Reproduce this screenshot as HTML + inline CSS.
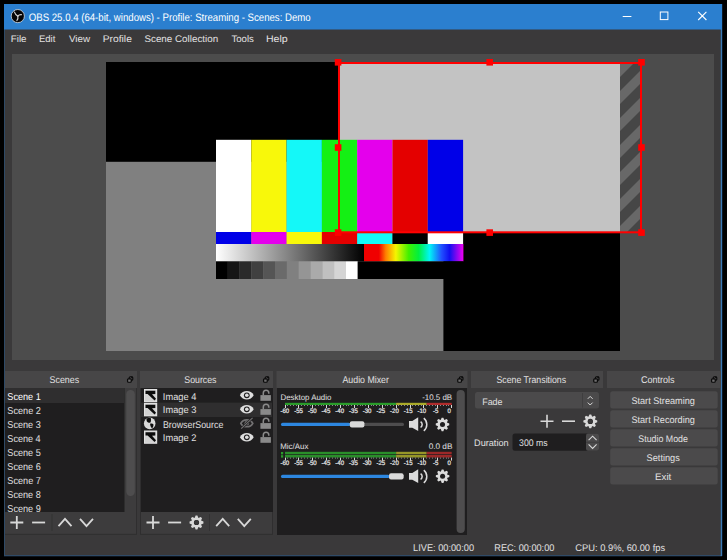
<!DOCTYPE html>
<html><head><meta charset="utf-8"><style>
html,body{margin:0;padding:0;background:#000;width:727px;height:560px;overflow:hidden}
svg{display:block}
text{font-family:"Liberation Sans",sans-serif;white-space:pre;text-rendering:geometricPrecision}
</style></head><body>
<svg width="727" height="560" viewBox="0 0 727 560">
<rect x="0" y="0" width="727" height="560" fill="#000"/>
<rect x="4" y="4" width="718" height="552.3" fill="#2f4a66"/>
<rect x="720.6" y="4" width="1.6" height="552" fill="#3d7ab5"/>
<rect x="5" y="29" width="715.6" height="526" fill="#3a393a"/>
<rect x="4" y="4" width="718" height="25.5" fill="#2b7fcf"/>
<rect x="12" y="54" width="702" height="306" fill="#4c4c4c"/>
<rect x="106" y="62" width="514" height="289" fill="#000"/>
<rect x="106" y="161.8" width="337.4" height="189.2" fill="#808080"/>
<rect x="338" y="62" width="282" height="170" fill="#c3c3c3"/>
<defs><pattern id="stripes" patternUnits="userSpaceOnUse" width="27" height="27" patternTransform="translate(620,64)"><rect width="27" height="27" fill="#464646"/><polygon points="0,0 0,13 13,0" fill="#686868"/><polygon points="0,27 27,0 27,13 13,27" fill="#686868"/></pattern></defs>
<rect x="620" y="62" width="21" height="170.5" fill="url(#stripes)"/>
<rect x="216" y="139.8" width="35.30000000000001" height="92.2" fill="#ffffff"/>
<rect x="251.3" y="139.8" width="35.30000000000001" height="92.2" fill="#f8f80a"/>
<rect x="286.6" y="139.8" width="35.299999999999955" height="92.2" fill="#14f8f8"/>
<rect x="321.9" y="139.8" width="35.30000000000001" height="92.2" fill="#14f014"/>
<rect x="357.2" y="139.8" width="35.30000000000001" height="92.2" fill="#e400ec"/>
<rect x="392.5" y="139.8" width="35.30000000000001" height="92.2" fill="#e40000"/>
<rect x="427.8" y="139.8" width="35.30000000000001" height="92.2" fill="#0000e8"/>
<rect x="216" y="232" width="35.30000000000001" height="12" fill="#0000e8"/>
<rect x="251.3" y="232" width="35.30000000000001" height="12" fill="#e400ec"/>
<rect x="286.6" y="232" width="35.299999999999955" height="12" fill="#f8f80a"/>
<rect x="321.9" y="232" width="35.30000000000001" height="12" fill="#e40000"/>
<rect x="357.2" y="232" width="35.30000000000001" height="12" fill="#14f8f8"/>
<rect x="392.5" y="232" width="35.30000000000001" height="12" fill="#000000"/>
<rect x="427.8" y="232" width="35.30000000000001" height="12" fill="#ffffff"/>
<defs><linearGradient id="gw" x1="0" x2="1"><stop offset="0" stop-color="#fff"/><stop offset="1" stop-color="#000"/></linearGradient><linearGradient id="rb" x1="0" x2="1"><stop offset="0" stop-color="#f00000"/><stop offset="0.15" stop-color="#f00000"/><stop offset="0.22" stop-color="#ff8000"/><stop offset="0.32" stop-color="#f5f500"/><stop offset="0.45" stop-color="#40f000"/><stop offset="0.55" stop-color="#00f040"/><stop offset="0.66" stop-color="#00f5f5"/><stop offset="0.78" stop-color="#2050ff"/><stop offset="0.86" stop-color="#1010f0"/><stop offset="1" stop-color="#f000f0"/></linearGradient></defs>
<rect x="216" y="244" width="148" height="17.4" fill="url(#gw)"/>
<rect x="364" y="244" width="99.4" height="17.4" fill="url(#rb)"/>
<rect x="216.0" y="261.4" width="11.858333333333333" height="17.6" fill="#000000"/>
<rect x="227.80833333333334" y="261.4" width="11.858333333333333" height="17.6" fill="#151515"/>
<rect x="239.61666666666667" y="261.4" width="11.858333333333333" height="17.6" fill="#2a2a2a"/>
<rect x="251.425" y="261.4" width="11.858333333333333" height="17.6" fill="#404040"/>
<rect x="263.23333333333335" y="261.4" width="11.858333333333333" height="17.6" fill="#555555"/>
<rect x="275.04166666666663" y="261.4" width="11.858333333333333" height="17.6" fill="#6a6a6a"/>
<rect x="286.85" y="261.4" width="11.858333333333333" height="17.6" fill="#808080"/>
<rect x="298.6583333333333" y="261.4" width="11.858333333333333" height="17.6" fill="#959595"/>
<rect x="310.46666666666664" y="261.4" width="11.858333333333333" height="17.6" fill="#aaaaaa"/>
<rect x="322.275" y="261.4" width="11.858333333333333" height="17.6" fill="#c0c0c0"/>
<rect x="334.0833333333333" y="261.4" width="11.858333333333333" height="17.6" fill="#d5d5d5"/>
<rect x="345.89166666666665" y="261.4" width="11.858333333333333" height="17.6" fill="#ffffff"/>
<rect x="357.7" y="261.4" width="105.7" height="17.6" fill="#000"/>
<rect x="339" y="63" width="302" height="169.3" fill="none" stroke="#ff0000" stroke-width="2"/>
<rect x="334.8" y="59.0" width="6.6" height="6.6" fill="#ff0000"/>
<rect x="486.4" y="59.0" width="6.6" height="6.6" fill="#ff0000"/>
<rect x="638.2" y="59.0" width="6.6" height="6.6" fill="#ff0000"/>
<rect x="334.8" y="144.2" width="6.6" height="6.6" fill="#ff0000"/>
<rect x="638.2" y="144.2" width="6.6" height="6.6" fill="#ff0000"/>
<rect x="334.8" y="229.29999999999998" width="6.6" height="6.6" fill="#ff0000"/>
<rect x="486.4" y="229.29999999999998" width="6.6" height="6.6" fill="#ff0000"/>
<rect x="638.2" y="229.29999999999998" width="6.6" height="6.6" fill="#ff0000"/>
<text x="28.77" y="20.50" font-size="10.90" fill="#ffffff" textLength="281.92" lengthAdjust="spacingAndGlyphs">OBS 25.0.4 (64-bit, windows) - Profile: Streaming - Scenes: Demo</text>
<g transform="translate(17.8,16.1)"><circle r="6.6" fill="#050505" stroke="#d4dce6" stroke-width="0.8"/><path d="M0,0 Q-2.2,-0.9 -3.3,-4.0" fill="none" stroke="#d0d0d0" stroke-width="1.2" stroke-linecap="round"/><path d="M0,0 Q1.3,-1.7 3.6,-1.5" fill="none" stroke="#d0d0d0" stroke-width="1.2" stroke-linecap="round"/><path d="M0,0 Q0.6,2.3 -0.9,4.4" fill="none" stroke="#d0d0d0" stroke-width="1.2" stroke-linecap="round"/></g>
<rect x="622.7" y="16" width="8.7" height="1" fill="#ffffff"/>
<rect x="660.3" y="12" width="7.6" height="7.6" fill="none" stroke="#ffffff" stroke-width="1"/>
<path d="M698.2,11.8 L706.4,20 M706.4,11.8 L698.2,20" stroke="#ffffff" stroke-width="1.1"/>
<text x="10.82" y="41.60" font-size="9.60" fill="#e1e0e1" textLength="15.73" lengthAdjust="spacingAndGlyphs">File</text>
<text x="38.94" y="41.60" font-size="9.60" fill="#e1e0e1" textLength="16.44" lengthAdjust="spacingAndGlyphs">Edit</text>
<text x="68.95" y="41.60" font-size="9.60" fill="#e1e0e1" textLength="21.04" lengthAdjust="spacingAndGlyphs">View</text>
<text x="102.78" y="41.60" font-size="9.60" fill="#e1e0e1" textLength="29.08" lengthAdjust="spacingAndGlyphs">Profile</text>
<text x="144.46" y="41.60" font-size="9.60" fill="#e1e0e1" textLength="73.68" lengthAdjust="spacingAndGlyphs">Scene Collection</text>
<text x="231.41" y="41.60" font-size="9.60" fill="#e1e0e1" textLength="22.53" lengthAdjust="spacingAndGlyphs">Tools</text>
<text x="265.95" y="41.60" font-size="9.60" fill="#e1e0e1" textLength="21.79" lengthAdjust="spacingAndGlyphs">Help</text>
<rect x="5" y="371" width="132" height="17" fill="#474647"/>
<rect x="140" y="371" width="133" height="17" fill="#474647"/>
<rect x="276.5" y="371" width="191.0" height="17" fill="#474647"/>
<rect x="471" y="371" width="132" height="17" fill="#474647"/>
<rect x="607" y="371" width="114" height="17" fill="#474647"/>
<text x="49.60" y="383.30" font-size="9.80" fill="#e1e0e1" textLength="29.51" lengthAdjust="spacingAndGlyphs">Scenes</text>
<text x="184.31" y="383.30" font-size="9.80" fill="#e1e0e1" textLength="32.19" lengthAdjust="spacingAndGlyphs">Sources</text>
<text x="342.50" y="383.30" font-size="9.80" fill="#e1e0e1" textLength="46.38" lengthAdjust="spacingAndGlyphs">Audio Mixer</text>
<text x="496.41" y="383.30" font-size="9.80" fill="#e1e0e1" textLength="69.69" lengthAdjust="spacingAndGlyphs">Scene Transitions</text>
<text x="640.95" y="383.30" font-size="9.80" fill="#e1e0e1" textLength="33.66" lengthAdjust="spacingAndGlyphs">Controls</text>
<g transform="translate(127,376.4)"><rect x="2.2" y="0.4" width="3.6" height="3.5" rx="1" fill="none" stroke="#0a0a0a" stroke-width="1.1"/><rect x="4.2" y="0.2" width="1.6" height="1.4" fill="#0a0a0a"/><rect x="0.5" y="2.3" width="3.8" height="3.6" rx="1" fill="#474647" stroke="#0a0a0a" stroke-width="1.1"/><rect x="1.4" y="4.0" width="2.0" height="1.0" fill="#8a898a"/></g>
<g transform="translate(263,376.4)"><rect x="2.2" y="0.4" width="3.6" height="3.5" rx="1" fill="none" stroke="#0a0a0a" stroke-width="1.1"/><rect x="4.2" y="0.2" width="1.6" height="1.4" fill="#0a0a0a"/><rect x="0.5" y="2.3" width="3.8" height="3.6" rx="1" fill="#474647" stroke="#0a0a0a" stroke-width="1.1"/><rect x="1.4" y="4.0" width="2.0" height="1.0" fill="#8a898a"/></g>
<g transform="translate(457.2,376.4)"><rect x="2.2" y="0.4" width="3.6" height="3.5" rx="1" fill="none" stroke="#0a0a0a" stroke-width="1.1"/><rect x="4.2" y="0.2" width="1.6" height="1.4" fill="#0a0a0a"/><rect x="0.5" y="2.3" width="3.8" height="3.6" rx="1" fill="#474647" stroke="#0a0a0a" stroke-width="1.1"/><rect x="1.4" y="4.0" width="2.0" height="1.0" fill="#8a898a"/></g>
<g transform="translate(593.2,376.4)"><rect x="2.2" y="0.4" width="3.6" height="3.5" rx="1" fill="none" stroke="#0a0a0a" stroke-width="1.1"/><rect x="4.2" y="0.2" width="1.6" height="1.4" fill="#0a0a0a"/><rect x="0.5" y="2.3" width="3.8" height="3.6" rx="1" fill="#474647" stroke="#0a0a0a" stroke-width="1.1"/><rect x="1.4" y="4.0" width="2.0" height="1.0" fill="#8a898a"/></g>
<g transform="translate(711,376.4)"><rect x="2.2" y="0.4" width="3.6" height="3.5" rx="1" fill="none" stroke="#0a0a0a" stroke-width="1.1"/><rect x="4.2" y="0.2" width="1.6" height="1.4" fill="#0a0a0a"/><rect x="0.5" y="2.3" width="3.8" height="3.6" rx="1" fill="#474647" stroke="#0a0a0a" stroke-width="1.1"/><rect x="1.4" y="4.0" width="2.0" height="1.0" fill="#8a898a"/></g>
<rect x="5" y="388" width="132" height="146.8" fill="#2f2e2f"/>
<rect x="5" y="388" width="131" height="145.8" fill="#3d3c3d"/>
<rect x="140" y="388" width="133" height="146.8" fill="#2f2e2f"/>
<rect x="141" y="388" width="131" height="145.8" fill="#3d3c3d"/>
<rect x="5" y="388" width="119.5" height="124" fill="#1f1e1f"/>
<rect x="5" y="388" width="119.5" height="15" fill="#2f2e2f"/>
<text x="7.34" y="399.90" font-size="10.00" fill="#ffffff" textLength="33.47" lengthAdjust="spacingAndGlyphs">Scene 1</text>
<text x="7.34" y="413.90" font-size="10.00" fill="#e1e0e1" textLength="33.51" lengthAdjust="spacingAndGlyphs">Scene 2</text>
<text x="7.34" y="427.90" font-size="10.00" fill="#e1e0e1" textLength="33.42" lengthAdjust="spacingAndGlyphs">Scene 3</text>
<text x="7.34" y="441.90" font-size="10.00" fill="#e1e0e1" textLength="33.33" lengthAdjust="spacingAndGlyphs">Scene 4</text>
<text x="7.34" y="455.90" font-size="10.00" fill="#e1e0e1" textLength="33.42" lengthAdjust="spacingAndGlyphs">Scene 5</text>
<text x="7.34" y="469.90" font-size="10.00" fill="#e1e0e1" textLength="33.42" lengthAdjust="spacingAndGlyphs">Scene 6</text>
<text x="7.34" y="483.90" font-size="10.00" fill="#e1e0e1" textLength="33.51" lengthAdjust="spacingAndGlyphs">Scene 7</text>
<text x="7.34" y="497.90" font-size="10.00" fill="#e1e0e1" textLength="33.42" lengthAdjust="spacingAndGlyphs">Scene 8</text>
<text x="7.34" y="511.90" font-size="10.00" fill="#e1e0e1" textLength="33.47" lengthAdjust="spacingAndGlyphs">Scene 9</text>
<rect x="126.3" y="390" width="8.5" height="106" rx="4.2" fill="#4e4d4e"/>
<path d="M10.3,522.5 H23.3 M16.8,516.0 V529.0" stroke="#d8d8d8" stroke-width="1.8"/>
<path d="M32.1,522.5 H45.1" stroke="#d8d8d8" stroke-width="1.8"/>
<rect x="51.5" y="514" width="1" height="17" fill="#333233"/>
<path d="M58.5,526.075 L65,518.925 L71.5,526.075" fill="none" stroke="#d8d8d8" stroke-width="1.8"/>
<path d="M80.0,518.925 L86.5,526.075 L93.0,518.925" fill="none" stroke="#d8d8d8" stroke-width="1.8"/>
<rect x="141" y="388" width="132" height="124" fill="#1f1e1f"/>
<rect x="141" y="402.6" width="131" height="14.5" fill="#2f2e2f"/>
<g transform="translate(144,389)"><rect width="13.2" height="13.3" fill="#e2e2e2"/><rect x="1" y="1" width="11.2" height="11.3" fill="#d2d2d2"/><path d="M1.5,1.8 H11.3 V5.1 L8.0,5.2 L12.0,9.8 L10.6,11.6 L3.6,5.1 L1.5,5.1 Z" fill="#0b0b0b"/></g>
<g transform="translate(144,403)"><rect width="13.2" height="13.3" fill="#e2e2e2"/><rect x="1" y="1" width="11.2" height="11.3" fill="#d2d2d2"/><path d="M1.5,1.8 H11.3 V5.1 L8.0,5.2 L12.0,9.8 L10.6,11.6 L3.6,5.1 L1.5,5.1 Z" fill="#0b0b0b"/></g>
<g transform="translate(143.9,417.6)"><circle cx="5.8" cy="5.8" r="5.8" fill="#d9d9d9"/><path d="M2.6,1.2 C3.8,0.2 5.6,0.0 6.8,0.4 C7.4,1.8 7.0,3.6 6.6,5.0 C5.4,5.4 3.8,4.8 3.0,3.8 C2.6,2.9 2.5,2.0 2.6,1.2 Z" fill="#0b0b0b"/><path d="M6.4,6.0 C7.6,5.6 9.0,5.8 9.6,6.8 C9.6,8.2 9.2,9.6 8.2,10.6 C7.4,10.2 6.8,9.2 6.6,8.4 C6.2,7.6 6.1,6.8 6.4,6.0 Z" fill="#0b0b0b"/></g>
<g transform="translate(144,430.5)"><rect width="13.2" height="13.3" fill="#e2e2e2"/><rect x="1" y="1" width="11.2" height="11.3" fill="#d2d2d2"/><path d="M1.5,1.8 H11.3 V5.1 L8.0,5.2 L12.0,9.8 L10.6,11.6 L3.6,5.1 L1.5,5.1 Z" fill="#0b0b0b"/></g>
<text x="162.87" y="399.75" font-size="9.80" fill="#e1e0e1" textLength="33.44" lengthAdjust="spacingAndGlyphs">Image 4</text>
<text x="162.86" y="413.30" font-size="9.80" fill="#e1e0e1" textLength="33.54" lengthAdjust="spacingAndGlyphs">Image 3</text>
<text x="162.99" y="427.60" font-size="9.80" fill="#e1e0e1" textLength="60.31" lengthAdjust="spacingAndGlyphs">BrowserSource</text>
<text x="162.86" y="441.00" font-size="9.80" fill="#e1e0e1" textLength="33.63" lengthAdjust="spacingAndGlyphs">Image 2</text>
<g transform="translate(246.8,395.3)"><path d="M-6.9,0 C-4.2,-5.6 4.2,-5.6 6.9,0 C4.2,5.6 -4.2,5.6 -6.9,0 Z" fill="#dedede"/><circle r="2.9" fill="#1f1e1f"/><circle r="1.8" fill="#dedede"/></g>
<g transform="translate(260.4,389.5)"><rect x="0" y="5.6" width="10.5" height="5.7" fill="#8a8a8a"/><path d="M2.9,5.8 V3.6 A2.75,2.75 0 0 1 8.4,3.6 V4.2" fill="none" stroke="#8a8a8a" stroke-width="1.5"/></g>
<g transform="translate(246.8,409.3)"><path d="M-6.9,0 C-4.2,-5.6 4.2,-5.6 6.9,0 C4.2,5.6 -4.2,5.6 -6.9,0 Z" fill="#dedede"/><circle r="2.9" fill="#1f1e1f"/><circle r="1.8" fill="#dedede"/></g>
<g transform="translate(260.4,403.5)"><rect x="0" y="5.6" width="10.5" height="5.7" fill="#8a8a8a"/><path d="M2.9,5.8 V3.6 A2.75,2.75 0 0 1 8.4,3.6 V4.2" fill="none" stroke="#8a8a8a" stroke-width="1.5"/></g>
<g transform="translate(246.8,423.3)"><path d="M-6.0,0 C-3.6,-4.6 3.6,-4.6 6.0,0 C3.6,4.6 -3.6,4.6 -6.0,0 Z" fill="none" stroke="#727172" stroke-width="1.7"/><circle r="2.3" fill="#727172"/><circle r="1.0" fill="#1f1e1f"/><path d="M-5.6,5.4 L5.8,-5.4" stroke="#1f1e1f" stroke-width="2.4"/><path d="M-5.6,5.4 L5.8,-5.4" stroke="#727172" stroke-width="1.1"/></g>
<g transform="translate(260.4,417.5)"><rect x="0" y="5.6" width="10.5" height="5.7" fill="#8a8a8a"/><path d="M2.9,5.8 V3.6 A2.75,2.75 0 0 1 8.4,3.6 V4.2" fill="none" stroke="#8a8a8a" stroke-width="1.5"/></g>
<g transform="translate(246.8,437.3)"><path d="M-6.9,0 C-4.2,-5.6 4.2,-5.6 6.9,0 C4.2,5.6 -4.2,5.6 -6.9,0 Z" fill="#dedede"/><circle r="2.9" fill="#1f1e1f"/><circle r="1.8" fill="#dedede"/></g>
<g transform="translate(260.4,431.5)"><rect x="0" y="5.6" width="10.5" height="5.7" fill="#8a8a8a"/><path d="M2.9,5.8 V3.6 A2.75,2.75 0 0 1 8.4,3.6 V4.2" fill="none" stroke="#8a8a8a" stroke-width="1.5"/></g>
<path d="M146.5,522.5 H159.5 M153,516.0 V529.0" stroke="#d8d8d8" stroke-width="1.8"/>
<path d="M168.1,522.5 H181.1" stroke="#d8d8d8" stroke-width="1.8"/>
<rect x="209" y="514" width="1" height="17" fill="#333233"/>
<path d="M216.2,526.075 L222.7,518.925 L229.2,526.075" fill="none" stroke="#d8d8d8" stroke-width="1.8"/>
<path d="M237.8,518.925 L244.3,526.075 L250.8,518.925" fill="none" stroke="#d8d8d8" stroke-width="1.8"/>
<polygon points="194.62,517.97 195.62,515.56 197.38,515.56 198.38,517.97 198.38,517.97 200.79,516.97 202.03,518.21 201.03,520.62 201.03,520.62 203.44,521.62 203.44,523.38 201.03,524.38 201.03,524.38 202.03,526.79 200.79,528.03 198.38,527.03 198.38,527.03 197.38,529.44 195.62,529.44 194.62,527.03 194.62,527.03 192.21,528.03 190.97,526.79 191.97,524.38 191.97,524.38 189.56,523.38 189.56,521.62 191.97,520.62 191.97,520.62 190.97,518.21 192.21,516.97 194.62,517.97" fill="#d8d8d8"/><circle cx="196.5" cy="522.5" r="2.59" fill="#1f1e1f"/>
<circle cx="196.5" cy="522.5" r="2.4" fill="#3a393a"/>
<rect x="277" y="388" width="190" height="147" fill="#1f1e1f"/>
<rect x="456.6" y="390" width="8.2" height="143" rx="4.1" fill="#4e4d4e"/>
<text x="280.47" y="399.60" font-size="8.10" fill="#e1e0e1" textLength="50.94" lengthAdjust="spacingAndGlyphs">Desktop Audio</text>
<text x="422.14" y="399.60" font-size="8.10" fill="#e1e0e1" textLength="30.06" lengthAdjust="spacingAndGlyphs">-10.5 dB</text>
<text x="280.27" y="448.50" font-size="8.10" fill="#e1e0e1" textLength="28.12" lengthAdjust="spacingAndGlyphs">Mic/Aux</text>
<text x="428.67" y="448.50" font-size="8.10" fill="#e1e0e1" textLength="23.75" lengthAdjust="spacingAndGlyphs">0.0 dB</text>
<rect x="285" y="402.8" width="111.13333333333333" height="2.2" fill="#2a9c2a"/>
<rect x="396.1333333333333" y="402.8" width="30.561666666666667" height="2.2" fill="#aaaa2a"/>
<rect x="426.695" y="402.8" width="25.004999999999995" height="2.2" fill="#b02c2c"/>
<rect x="285" y="451.8" width="111.13333333333333" height="2.5" fill="#2a8e2a"/>
<rect x="396.1333333333333" y="451.8" width="30.561666666666667" height="2.5" fill="#969628"/>
<rect x="426.695" y="451.8" width="25.004999999999995" height="2.5" fill="#9c2828"/>
<rect x="285" y="455" width="111.13333333333333" height="2.5" fill="#2a8e2a"/>
<rect x="396.1333333333333" y="455" width="30.561666666666667" height="2.5" fill="#969628"/>
<rect x="426.695" y="455" width="25.004999999999995" height="2.5" fill="#9c2828"/>
<rect x="281" y="452" width="2.2" height="2.4" fill="#2a9c2a"/>
<rect x="281" y="455.2" width="2.2" height="2.4" fill="#2a9c2a"/>
<rect x="285" y="405" width="1" height="3" fill="#d8d8d8"/>
<rect x="287" y="405" width="1" height="1" fill="#8a8a8a"/>
<rect x="290" y="405" width="1" height="1" fill="#8a8a8a"/>
<rect x="293" y="405" width="1" height="1" fill="#8a8a8a"/>
<rect x="296" y="405" width="1" height="1" fill="#8a8a8a"/>
<rect x="298" y="405" width="1" height="3" fill="#d8d8d8"/>
<rect x="301" y="405" width="1" height="1" fill="#8a8a8a"/>
<rect x="304" y="405" width="1" height="1" fill="#8a8a8a"/>
<rect x="307" y="405" width="1" height="1" fill="#8a8a8a"/>
<rect x="310" y="405" width="1" height="1" fill="#8a8a8a"/>
<rect x="312" y="405" width="1" height="3" fill="#d8d8d8"/>
<rect x="315" y="405" width="1" height="1" fill="#8a8a8a"/>
<rect x="318" y="405" width="1" height="1" fill="#8a8a8a"/>
<rect x="321" y="405" width="1" height="1" fill="#8a8a8a"/>
<rect x="323" y="405" width="1" height="1" fill="#8a8a8a"/>
<rect x="326" y="405" width="1" height="3" fill="#d8d8d8"/>
<rect x="329" y="405" width="1" height="1" fill="#8a8a8a"/>
<rect x="332" y="405" width="1" height="1" fill="#8a8a8a"/>
<rect x="335" y="405" width="1" height="1" fill="#8a8a8a"/>
<rect x="337" y="405" width="1" height="1" fill="#8a8a8a"/>
<rect x="340" y="405" width="1" height="3" fill="#d8d8d8"/>
<rect x="343" y="405" width="1" height="1" fill="#8a8a8a"/>
<rect x="346" y="405" width="1" height="1" fill="#8a8a8a"/>
<rect x="348" y="405" width="1" height="1" fill="#8a8a8a"/>
<rect x="351" y="405" width="1" height="1" fill="#8a8a8a"/>
<rect x="354" y="405" width="1" height="3" fill="#d8d8d8"/>
<rect x="357" y="405" width="1" height="1" fill="#8a8a8a"/>
<rect x="360" y="405" width="1" height="1" fill="#8a8a8a"/>
<rect x="362" y="405" width="1" height="1" fill="#8a8a8a"/>
<rect x="365" y="405" width="1" height="1" fill="#8a8a8a"/>
<rect x="368" y="405" width="1" height="3" fill="#d8d8d8"/>
<rect x="371" y="405" width="1" height="1" fill="#8a8a8a"/>
<rect x="373" y="405" width="1" height="1" fill="#8a8a8a"/>
<rect x="376" y="405" width="1" height="1" fill="#8a8a8a"/>
<rect x="379" y="405" width="1" height="1" fill="#8a8a8a"/>
<rect x="382" y="405" width="1" height="3" fill="#d8d8d8"/>
<rect x="385" y="405" width="1" height="1" fill="#8a8a8a"/>
<rect x="387" y="405" width="1" height="1" fill="#8a8a8a"/>
<rect x="390" y="405" width="1" height="1" fill="#8a8a8a"/>
<rect x="393" y="405" width="1" height="1" fill="#8a8a8a"/>
<rect x="396" y="405" width="1" height="3" fill="#d8d8d8"/>
<rect x="398" y="405" width="1" height="1" fill="#8a8a8a"/>
<rect x="401" y="405" width="1" height="1" fill="#8a8a8a"/>
<rect x="404" y="405" width="1" height="1" fill="#8a8a8a"/>
<rect x="407" y="405" width="1" height="1" fill="#8a8a8a"/>
<rect x="410" y="405" width="1" height="3" fill="#d8d8d8"/>
<rect x="412" y="405" width="1" height="1" fill="#8a8a8a"/>
<rect x="415" y="405" width="1" height="1" fill="#8a8a8a"/>
<rect x="418" y="405" width="1" height="1" fill="#8a8a8a"/>
<rect x="421" y="405" width="1" height="1" fill="#8a8a8a"/>
<rect x="423" y="405" width="1" height="3" fill="#d8d8d8"/>
<rect x="426" y="405" width="1" height="1" fill="#8a8a8a"/>
<rect x="429" y="405" width="1" height="1" fill="#8a8a8a"/>
<rect x="432" y="405" width="1" height="1" fill="#8a8a8a"/>
<rect x="435" y="405" width="1" height="1" fill="#8a8a8a"/>
<rect x="437" y="405" width="1" height="3" fill="#d8d8d8"/>
<rect x="440" y="405" width="1" height="1" fill="#8a8a8a"/>
<rect x="443" y="405" width="1" height="1" fill="#8a8a8a"/>
<rect x="446" y="405" width="1" height="1" fill="#8a8a8a"/>
<rect x="448" y="405" width="1" height="1" fill="#8a8a8a"/>
<rect x="451" y="405" width="1" height="3" fill="#d8d8d8"/>
<text x="280.48" y="412.90" font-size="6.40" fill="#e4e4e4" textLength="8.79" lengthAdjust="spacingAndGlyphs" stroke="#e4e4e4" stroke-width="0.22">-60</text>
<text x="294.19" y="412.90" font-size="6.40" fill="#e4e4e4" textLength="8.79" lengthAdjust="spacingAndGlyphs" stroke="#e4e4e4" stroke-width="0.22">-55</text>
<text x="307.88" y="412.90" font-size="6.40" fill="#e4e4e4" textLength="8.79" lengthAdjust="spacingAndGlyphs" stroke="#e4e4e4" stroke-width="0.22">-50</text>
<text x="321.59" y="412.90" font-size="6.40" fill="#e4e4e4" textLength="8.79" lengthAdjust="spacingAndGlyphs" stroke="#e4e4e4" stroke-width="0.22">-45</text>
<text x="335.28" y="412.90" font-size="6.40" fill="#e4e4e4" textLength="8.79" lengthAdjust="spacingAndGlyphs" stroke="#e4e4e4" stroke-width="0.22">-40</text>
<text x="348.99" y="412.90" font-size="6.40" fill="#e4e4e4" textLength="8.79" lengthAdjust="spacingAndGlyphs" stroke="#e4e4e4" stroke-width="0.22">-35</text>
<text x="362.68" y="412.90" font-size="6.40" fill="#e4e4e4" textLength="8.79" lengthAdjust="spacingAndGlyphs" stroke="#e4e4e4" stroke-width="0.22">-30</text>
<text x="376.39" y="412.90" font-size="6.40" fill="#e4e4e4" textLength="8.79" lengthAdjust="spacingAndGlyphs" stroke="#e4e4e4" stroke-width="0.22">-25</text>
<text x="390.08" y="412.90" font-size="6.40" fill="#e4e4e4" textLength="8.79" lengthAdjust="spacingAndGlyphs" stroke="#e4e4e4" stroke-width="0.22">-20</text>
<text x="403.79" y="412.90" font-size="6.40" fill="#e4e4e4" textLength="8.79" lengthAdjust="spacingAndGlyphs" stroke="#e4e4e4" stroke-width="0.22">-15</text>
<text x="417.48" y="412.90" font-size="6.40" fill="#e4e4e4" textLength="8.79" lengthAdjust="spacingAndGlyphs" stroke="#e4e4e4" stroke-width="0.22">-10</text>
<text x="432.88" y="412.90" font-size="6.40" fill="#e4e4e4" textLength="5.41" lengthAdjust="spacingAndGlyphs" stroke="#e4e4e4" stroke-width="0.22">-5</text>
<text x="447.60" y="412.90" font-size="6.40" fill="#e4e4e4" textLength="3.38" lengthAdjust="spacingAndGlyphs" stroke="#e4e4e4" stroke-width="0.22">0</text>
<rect x="285" y="457.6" width="1" height="3" fill="#d8d8d8"/>
<rect x="287" y="457.6" width="1" height="1" fill="#8a8a8a"/>
<rect x="290" y="457.6" width="1" height="1" fill="#8a8a8a"/>
<rect x="293" y="457.6" width="1" height="1" fill="#8a8a8a"/>
<rect x="296" y="457.6" width="1" height="1" fill="#8a8a8a"/>
<rect x="298" y="457.6" width="1" height="3" fill="#d8d8d8"/>
<rect x="301" y="457.6" width="1" height="1" fill="#8a8a8a"/>
<rect x="304" y="457.6" width="1" height="1" fill="#8a8a8a"/>
<rect x="307" y="457.6" width="1" height="1" fill="#8a8a8a"/>
<rect x="310" y="457.6" width="1" height="1" fill="#8a8a8a"/>
<rect x="312" y="457.6" width="1" height="3" fill="#d8d8d8"/>
<rect x="315" y="457.6" width="1" height="1" fill="#8a8a8a"/>
<rect x="318" y="457.6" width="1" height="1" fill="#8a8a8a"/>
<rect x="321" y="457.6" width="1" height="1" fill="#8a8a8a"/>
<rect x="323" y="457.6" width="1" height="1" fill="#8a8a8a"/>
<rect x="326" y="457.6" width="1" height="3" fill="#d8d8d8"/>
<rect x="329" y="457.6" width="1" height="1" fill="#8a8a8a"/>
<rect x="332" y="457.6" width="1" height="1" fill="#8a8a8a"/>
<rect x="335" y="457.6" width="1" height="1" fill="#8a8a8a"/>
<rect x="337" y="457.6" width="1" height="1" fill="#8a8a8a"/>
<rect x="340" y="457.6" width="1" height="3" fill="#d8d8d8"/>
<rect x="343" y="457.6" width="1" height="1" fill="#8a8a8a"/>
<rect x="346" y="457.6" width="1" height="1" fill="#8a8a8a"/>
<rect x="348" y="457.6" width="1" height="1" fill="#8a8a8a"/>
<rect x="351" y="457.6" width="1" height="1" fill="#8a8a8a"/>
<rect x="354" y="457.6" width="1" height="3" fill="#d8d8d8"/>
<rect x="357" y="457.6" width="1" height="1" fill="#8a8a8a"/>
<rect x="360" y="457.6" width="1" height="1" fill="#8a8a8a"/>
<rect x="362" y="457.6" width="1" height="1" fill="#8a8a8a"/>
<rect x="365" y="457.6" width="1" height="1" fill="#8a8a8a"/>
<rect x="368" y="457.6" width="1" height="3" fill="#d8d8d8"/>
<rect x="371" y="457.6" width="1" height="1" fill="#8a8a8a"/>
<rect x="373" y="457.6" width="1" height="1" fill="#8a8a8a"/>
<rect x="376" y="457.6" width="1" height="1" fill="#8a8a8a"/>
<rect x="379" y="457.6" width="1" height="1" fill="#8a8a8a"/>
<rect x="382" y="457.6" width="1" height="3" fill="#d8d8d8"/>
<rect x="385" y="457.6" width="1" height="1" fill="#8a8a8a"/>
<rect x="387" y="457.6" width="1" height="1" fill="#8a8a8a"/>
<rect x="390" y="457.6" width="1" height="1" fill="#8a8a8a"/>
<rect x="393" y="457.6" width="1" height="1" fill="#8a8a8a"/>
<rect x="396" y="457.6" width="1" height="3" fill="#d8d8d8"/>
<rect x="398" y="457.6" width="1" height="1" fill="#8a8a8a"/>
<rect x="401" y="457.6" width="1" height="1" fill="#8a8a8a"/>
<rect x="404" y="457.6" width="1" height="1" fill="#8a8a8a"/>
<rect x="407" y="457.6" width="1" height="1" fill="#8a8a8a"/>
<rect x="410" y="457.6" width="1" height="3" fill="#d8d8d8"/>
<rect x="412" y="457.6" width="1" height="1" fill="#8a8a8a"/>
<rect x="415" y="457.6" width="1" height="1" fill="#8a8a8a"/>
<rect x="418" y="457.6" width="1" height="1" fill="#8a8a8a"/>
<rect x="421" y="457.6" width="1" height="1" fill="#8a8a8a"/>
<rect x="423" y="457.6" width="1" height="3" fill="#d8d8d8"/>
<rect x="426" y="457.6" width="1" height="1" fill="#8a8a8a"/>
<rect x="429" y="457.6" width="1" height="1" fill="#8a8a8a"/>
<rect x="432" y="457.6" width="1" height="1" fill="#8a8a8a"/>
<rect x="435" y="457.6" width="1" height="1" fill="#8a8a8a"/>
<rect x="437" y="457.6" width="1" height="3" fill="#d8d8d8"/>
<rect x="440" y="457.6" width="1" height="1" fill="#8a8a8a"/>
<rect x="443" y="457.6" width="1" height="1" fill="#8a8a8a"/>
<rect x="446" y="457.6" width="1" height="1" fill="#8a8a8a"/>
<rect x="448" y="457.6" width="1" height="1" fill="#8a8a8a"/>
<rect x="451" y="457.6" width="1" height="3" fill="#d8d8d8"/>
<text x="280.48" y="465.20" font-size="6.40" fill="#e4e4e4" textLength="8.79" lengthAdjust="spacingAndGlyphs" stroke="#e4e4e4" stroke-width="0.22">-60</text>
<text x="294.19" y="465.20" font-size="6.40" fill="#e4e4e4" textLength="8.79" lengthAdjust="spacingAndGlyphs" stroke="#e4e4e4" stroke-width="0.22">-55</text>
<text x="307.88" y="465.20" font-size="6.40" fill="#e4e4e4" textLength="8.79" lengthAdjust="spacingAndGlyphs" stroke="#e4e4e4" stroke-width="0.22">-50</text>
<text x="321.59" y="465.20" font-size="6.40" fill="#e4e4e4" textLength="8.79" lengthAdjust="spacingAndGlyphs" stroke="#e4e4e4" stroke-width="0.22">-45</text>
<text x="335.28" y="465.20" font-size="6.40" fill="#e4e4e4" textLength="8.79" lengthAdjust="spacingAndGlyphs" stroke="#e4e4e4" stroke-width="0.22">-40</text>
<text x="348.99" y="465.20" font-size="6.40" fill="#e4e4e4" textLength="8.79" lengthAdjust="spacingAndGlyphs" stroke="#e4e4e4" stroke-width="0.22">-35</text>
<text x="362.68" y="465.20" font-size="6.40" fill="#e4e4e4" textLength="8.79" lengthAdjust="spacingAndGlyphs" stroke="#e4e4e4" stroke-width="0.22">-30</text>
<text x="376.39" y="465.20" font-size="6.40" fill="#e4e4e4" textLength="8.79" lengthAdjust="spacingAndGlyphs" stroke="#e4e4e4" stroke-width="0.22">-25</text>
<text x="390.08" y="465.20" font-size="6.40" fill="#e4e4e4" textLength="8.79" lengthAdjust="spacingAndGlyphs" stroke="#e4e4e4" stroke-width="0.22">-20</text>
<text x="403.79" y="465.20" font-size="6.40" fill="#e4e4e4" textLength="8.79" lengthAdjust="spacingAndGlyphs" stroke="#e4e4e4" stroke-width="0.22">-15</text>
<text x="417.48" y="465.20" font-size="6.40" fill="#e4e4e4" textLength="8.79" lengthAdjust="spacingAndGlyphs" stroke="#e4e4e4" stroke-width="0.22">-10</text>
<text x="432.88" y="465.20" font-size="6.40" fill="#e4e4e4" textLength="5.41" lengthAdjust="spacingAndGlyphs" stroke="#e4e4e4" stroke-width="0.22">-5</text>
<text x="447.60" y="465.20" font-size="6.40" fill="#e4e4e4" textLength="3.38" lengthAdjust="spacingAndGlyphs" stroke="#e4e4e4" stroke-width="0.22">0</text>
<rect x="281" y="422.79999999999995" width="69.30000000000001" height="3.2" fill="#2d87e0" rx="1.6"/>
<rect x="350.3" y="422.79999999999995" width="53.69999999999999" height="3.2" fill="#4e4d4e" rx="1.6"/>
<rect x="349.8" y="421.2" width="14.6" height="6.4" rx="2" fill="#dadada"/>
<rect x="281" y="474.79999999999995" width="108.5" height="3.2" fill="#2d87e0" rx="1.6"/>
<rect x="389.5" y="474.79999999999995" width="14.5" height="3.2" fill="#4e4d4e" rx="1.6"/>
<rect x="389.0" y="473.2" width="14.6" height="6.4" rx="2" fill="#dadada"/>
<g transform="translate(409,417.3)"><path d="M0,3.8 H3.3 L9.2,0 V13.8 L3.3,10.4 H0 Z" fill="#dcdcdc"/><path d="M11.6,4.4 C13.7,6 13.7,8.6 11.6,10.2" fill="none" stroke="#dcdcdc" stroke-width="1.5"/><path d="M14.8,0.9 C18.8,4.2 18.8,10.4 14.8,13.6" fill="none" stroke="#dcdcdc" stroke-width="1.5"/></g>
<polygon points="440.68,420.00 441.65,417.65 443.35,417.65 444.32,420.00 444.32,420.00 446.67,419.03 447.87,420.23 446.90,422.58 446.90,422.58 449.25,423.55 449.25,425.25 446.90,426.22 446.90,426.22 447.87,428.57 446.67,429.77 444.32,428.80 444.32,428.80 443.35,431.15 441.65,431.15 440.68,428.80 440.68,428.80 438.33,429.77 437.13,428.57 438.10,426.22 438.10,426.22 435.75,425.25 435.75,423.55 438.10,422.58 438.10,422.58 437.13,420.23 438.33,419.03 440.68,420.00" fill="#dcdcdc"/><circle cx="442.5" cy="424.4" r="2.52" fill="#1f1e1f"/>
<g transform="translate(409,469.3)"><path d="M0,3.8 H3.3 L9.2,0 V13.8 L3.3,10.4 H0 Z" fill="#dcdcdc"/><path d="M11.6,4.4 C13.7,6 13.7,8.6 11.6,10.2" fill="none" stroke="#dcdcdc" stroke-width="1.5"/><path d="M14.8,0.9 C18.8,4.2 18.8,10.4 14.8,13.6" fill="none" stroke="#dcdcdc" stroke-width="1.5"/></g>
<polygon points="440.78,471.80 441.75,469.45 443.45,469.45 444.42,471.80 444.42,471.80 446.77,470.83 447.97,472.03 447.00,474.38 447.00,474.38 449.35,475.35 449.35,477.05 447.00,478.02 447.00,478.02 447.97,480.37 446.77,481.57 444.42,480.60 444.42,480.60 443.45,482.95 441.75,482.95 440.78,480.60 440.78,480.60 438.43,481.57 437.23,480.37 438.20,478.02 438.20,478.02 435.85,477.05 435.85,475.35 438.20,474.38 438.20,474.38 437.23,472.03 438.43,470.83 440.78,471.80" fill="#dcdcdc"/><circle cx="442.6" cy="476.2" r="2.52" fill="#1f1e1f"/>
<rect x="475" y="392" width="124" height="16.6" rx="2.5" fill="#4b4a4b"/>
<rect x="582" y="393" width="1" height="14.6" fill="#3f3e3f"/>
<text x="482.18" y="404.50" font-size="9.30" fill="#e1e0e1" textLength="20.41" lengthAdjust="spacingAndGlyphs">Fade</text>
<path d="M587.8,398.8 L590.2,396.4 L592.6,398.8 M587.8,402.6 L590.2,405.0 L592.6,402.6" fill="none" stroke="#dcdcdc" stroke-width="1.0"/>
<path d="M540.5,421.2 H553.5 M547,414.7 V427.7" stroke="#d8d8d8" stroke-width="1.6"/>
<path d="M562.0,421.2 H575.0" stroke="#d8d8d8" stroke-width="1.6"/>
<polygon points="588.42,416.87 589.42,414.46 591.18,414.46 592.18,416.87 592.18,416.87 594.59,415.87 595.83,417.11 594.83,419.52 594.83,419.52 597.24,420.52 597.24,422.28 594.83,423.28 594.83,423.28 595.83,425.69 594.59,426.93 592.18,425.93 592.18,425.93 591.18,428.34 589.42,428.34 588.42,425.93 588.42,425.93 586.01,426.93 584.77,425.69 585.77,423.28 585.77,423.28 583.36,422.28 583.36,420.52 585.77,419.52 585.77,419.52 584.77,417.11 586.01,415.87 588.42,416.87" fill="#d8d8d8"/><circle cx="590.3" cy="421.4" r="2.59" fill="#1f1e1f"/>
<circle cx="590.3" cy="421.4" r="2.4" fill="#3a393a"/>
<text x="474.07" y="445.80" font-size="9.30" fill="#e1e0e1" textLength="34.52" lengthAdjust="spacingAndGlyphs">Duration</text>
<rect x="512.5" y="433.5" width="86.5" height="17.3" rx="2.5" fill="#1f1e1f"/>
<rect x="586" y="433.5" width="13" height="17.3" rx="2" fill="#4b4a4b"/>
<rect x="586" y="441.8" width="13" height="0.8" fill="#3a393a"/>
<text x="519.05" y="445.90" font-size="9.50" fill="#e1e0e1" textLength="28.55" lengthAdjust="spacingAndGlyphs">300 ms</text>
<path d="M588.6,440.2 L592.6,436.2 L596.6,440.2 M588.6,444.4 L592.6,448.4 L596.6,444.4" fill="none" stroke="#d8d8d8" stroke-width="1.1"/>
<rect x="610.2" y="391.2" width="107.5" height="17.3" rx="2.5" fill="#4b4a4b"/>
<text x="631.39" y="404.00" font-size="9.60" fill="#e1e0e1" textLength="63.53" lengthAdjust="spacingAndGlyphs">Start Streaming</text>
<rect x="610.2" y="410.2" width="107.5" height="17.3" rx="2.5" fill="#4b4a4b"/>
<text x="631.39" y="423.00" font-size="9.60" fill="#e1e0e1" textLength="63.53" lengthAdjust="spacingAndGlyphs">Start Recording</text>
<rect x="610.2" y="429.2" width="107.5" height="17.3" rx="2.5" fill="#4b4a4b"/>
<text x="638.35" y="442.00" font-size="9.60" fill="#e1e0e1" textLength="49.54" lengthAdjust="spacingAndGlyphs">Studio Mode</text>
<rect x="610.2" y="448.2" width="107.5" height="17.3" rx="2.5" fill="#4b4a4b"/>
<text x="646.59" y="461.00" font-size="9.60" fill="#e1e0e1" textLength="33.22" lengthAdjust="spacingAndGlyphs">Settings</text>
<rect x="610.2" y="467.2" width="107.5" height="17.3" rx="2.5" fill="#4b4a4b"/>
<text x="655.02" y="479.80" font-size="9.60" fill="#e1e0e1" textLength="16.25" lengthAdjust="spacingAndGlyphs">Exit</text>
<text x="413.06" y="550.60" font-size="9.70" fill="#e1e0e1" textLength="60.97" lengthAdjust="spacingAndGlyphs">LIVE: 00:00:00</text>
<text x="494.27" y="550.60" font-size="9.70" fill="#e1e0e1" textLength="60.05" lengthAdjust="spacingAndGlyphs">REC: 00:00:00</text>
<text x="575.23" y="550.50" font-size="9.60" fill="#e1e0e1" textLength="89.91" lengthAdjust="spacingAndGlyphs">CPU: 0.9%, 60.00 fps</text>
</svg>
</body></html>
